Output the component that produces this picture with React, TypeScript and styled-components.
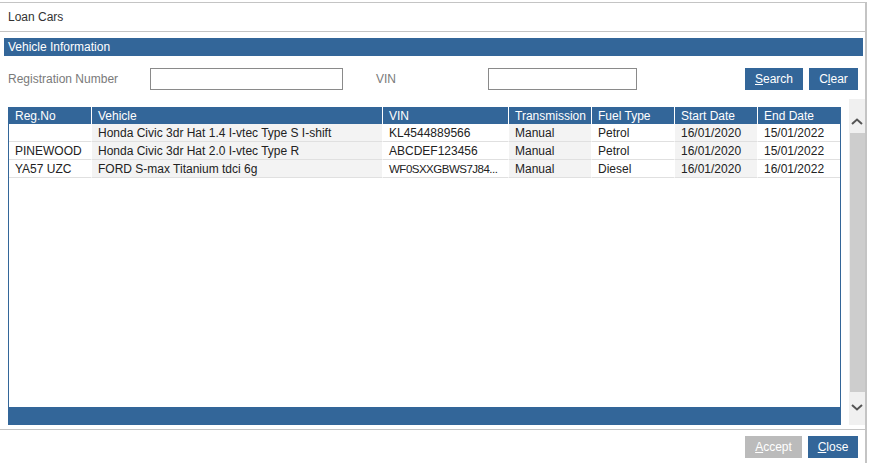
import styled, { createGlobalStyle } from "styled-components";

interface Vehicle {
  regNo: string;
  vehicle: string;
  vin: string;
  transmission: string;
  fuelType: string;
  startDate: string;
  endDate: string;
}

const vehicles: Vehicle[] = [
  {
    regNo: "",
    vehicle: "Honda Civic 3dr Hat 1.4 I-vtec Type S I-shift",
    vin: "KL4544889566",
    transmission: "Manual",
    fuelType: "Petrol",
    startDate: "16/01/2020",
    endDate: "15/01/2022",
  },
  {
    regNo: "PINEWOOD",
    vehicle: "Honda Civic 3dr Hat 2.0 I-vtec Type R",
    vin: "ABCDEF123456",
    transmission: "Manual",
    fuelType: "Petrol",
    startDate: "16/01/2020",
    endDate: "15/01/2022",
  },
  {
    regNo: "YA57 UZC",
    vehicle: "FORD S-max Titanium tdci 6g",
    vin: "WF0SXXGBWS7J84...",
    transmission: "Manual",
    fuelType: "Diesel",
    startDate: "16/01/2020",
    endDate: "16/01/2022",
  },
];

const columns = [
  { title: "Reg.No", width: 82 },
  { title: "Vehicle", width: 291 },
  { title: "VIN", width: 126 },
  { title: "Transmission", width: 83 },
  { title: "Fuel Type", width: 83 },
  { title: "Start Date", width: 83 },
  { title: "End Date", width: 83 },
];

const GlobalStyle = createGlobalStyle`
  body {
    margin: 0;
    padding-top: 2px;
    background: #fff;
    font-family: "Liberation Sans", Arial, sans-serif;
    font-size: 12px;
    color: #222;
  }
`;

const Window = styled.div`
  width: 865px;
  height: 461px;
  border-top: 1px solid #c4c4c4;
  border-right: 2px solid #c4c4c4;
  display: flex;
  flex-direction: column;
`;

const TitleBar = styled.div`
  height: 28px;
  display: flex;
  align-items: center;
  padding-left: 8px;
  border-bottom: 1px solid #c4c4c4;
  color: #333;
  font-size: 12px;
`;

const SectionHeader = styled.div`
  margin: 6px 2px 0 4px;
  height: 18px;
  line-height: 19px;
  padding-left: 4px;
  background: #336699;
  color: #fff;
`;

const SearchRow = styled.div`
  display: flex;
  align-items: center;
  margin-top: 12px;
  padding: 0 7px 0 8px;
  height: 22px;
`;

const Label = styled.label<{ $width: number; $gap?: number }>`
  width: ${(p) => p.$width}px;
  margin-left: ${(p) => p.$gap ?? 0}px;
  color: #7a7a7a;
`;

const TextInput = styled.input<{ $width: number }>`
  box-sizing: border-box;
  width: ${(p) => p.$width}px;
  height: 22px;
  border: 1px solid #8a8a8a;
  padding: 0 4px;
  font: inherit;
  outline: none;
`;

const Spacer = styled.div`
  flex: 1;
`;

const Button = styled.button<{ $disabled?: boolean; $width: number }>`
  width: ${(p) => p.$width}px;
  height: 22px;
  border: none;
  padding: 0;
  background: ${(p) => (p.$disabled ? "#bbbbbb" : "#336699")};
  color: #fff;
  font: inherit;
  cursor: pointer;
  & + & {
    margin-left: 6px;
  }
  u {
    text-decoration: underline;
  }
`;

const GridArea = styled.div`
  display: flex;
  margin-top: 9px;
  padding-left: 8px;
  height: 326px;
`;

const TableBox = styled.div`
  margin-top: 8px;
  width: 831px;
  flex-shrink: 0;
  border-left: 1px solid #336699;
  border-right: 1px solid #336699;
  display: flex;
  flex-direction: column;
`;

const Table = styled.table`
  border-collapse: separate;
  border-spacing: 0;
  table-layout: fixed;
  width: 831px;
`;

const HeadCell = styled.th<{ $width: number }>`
  box-sizing: border-box;
  width: ${(p) => p.$width}px;
  height: 17px;
  padding: 0 0 0 6px;
  background: #336699;
  color: #fff;
  font-weight: normal;
  text-align: left;
  border-left: 1px solid #fff;
  &:first-child {
    border-left: none;
  }
`;

const Cell = styled.td<{ $shade: boolean; $tight: boolean }>`
  box-sizing: border-box;
  height: 18px;
  padding: 0 0 0 6px;
  white-space: nowrap;
  overflow: hidden;
  font-size: ${(p) => (p.$tight ? "11.5px" : "12px")};
  letter-spacing: ${(p) => (p.$tight ? "-0.5px" : "normal")};
  background: ${(p) => (p.$shade ? "#f3f3f3" : "#fff")};
  border-bottom: 1px solid #e0e0e0;
  border-left: 1px solid #fff;
  &:first-child {
    border-left: none;
  }
`;

const Fill = styled.div`
  flex: 1;
`;

const TableFooter = styled.div`
  height: 18px;
  background: #336699;
`;

const Scrollbar = styled.div`
  margin-left: 8px;
  width: 16px;
  background: #f0f0f0;
  display: flex;
  flex-direction: column;
  align-items: center;
`;

const Arrow = styled.div<{ $height: number; $pad: number }>`
  box-sizing: border-box;
  height: ${(p) => p.$height}px;
  padding-top: ${(p) => p.$pad}px;
  display: flex;
  justify-content: center;
`;

const Thumb = styled.div`
  width: 15px;
  flex: 1;
  background: #cdcdcd;
`;

const Footer = styled.div`
  margin-top: 4px;
  border-top: 1px solid #c4c4c4;
  display: flex;
  justify-content: flex-end;
  padding: 6px 7px 0 0;
`;

function Chevron({ up }: { up?: boolean }) {
  return (
    <svg width="12" height="7" viewBox="0 0 12 7">
      <path
        d={up ? "M1 6 L6 1.5 L11 6" : "M1 1 L6 5.5 L11 1"}
        fill="none"
        stroke="#555"
        strokeWidth="2"
      />
    </svg>
  );
}

export default function App() {
  return (
    <>
      <GlobalStyle />
      <Window>
        <TitleBar>Loan Cars</TitleBar>
        <SectionHeader>Vehicle Information</SectionHeader>
        <SearchRow>
          <Label $width={142}>Registration Number</Label>
          <TextInput $width={193} />
          <Label $width={112} $gap={33}>
            VIN
          </Label>
          <TextInput $width={149} />
          <Spacer />
          <Button $width={58}>
            <u>S</u>earch
          </Button>
          <Button $width={49}>
            C<u>l</u>ear
          </Button>
        </SearchRow>
        <GridArea>
          <TableBox>
            <Table>
              <thead>
                <tr>
                  {columns.map((c) => (
                    <HeadCell key={c.title} $width={c.width}>
                      {c.title}
                    </HeadCell>
                  ))}
                </tr>
              </thead>
              <tbody>
                {vehicles.map((v, i) => {
                  const cells = [
                    v.regNo,
                    v.vehicle,
                    v.vin,
                    v.transmission,
                    v.fuelType,
                    v.startDate,
                    v.endDate,
                  ];
                  return (
                    <tr key={i}>
                      {cells.map((text, j) => (
                        <Cell
                          key={j}
                          $shade={j % 2 === 1}
                          $tight={text.endsWith("...")}
                        >
                          {text}
                        </Cell>
                      ))}
                    </tr>
                  );
                })}
              </tbody>
            </Table>
            <Fill />
            <TableFooter />
          </TableBox>
          <Scrollbar>
            <Arrow $height={34} $pad={19}>
              <Chevron up />
            </Arrow>
            <Thumb />
            <Arrow $height={33} $pad={12}>
              <Chevron />
            </Arrow>
          </Scrollbar>
        </GridArea>
        <Footer>
          <Button $width={57} $disabled>
            <u>A</u>ccept
          </Button>
          <Button $width={50}>
            <u>C</u>lose
          </Button>
        </Footer>
      </Window>
    </>
  );
}
